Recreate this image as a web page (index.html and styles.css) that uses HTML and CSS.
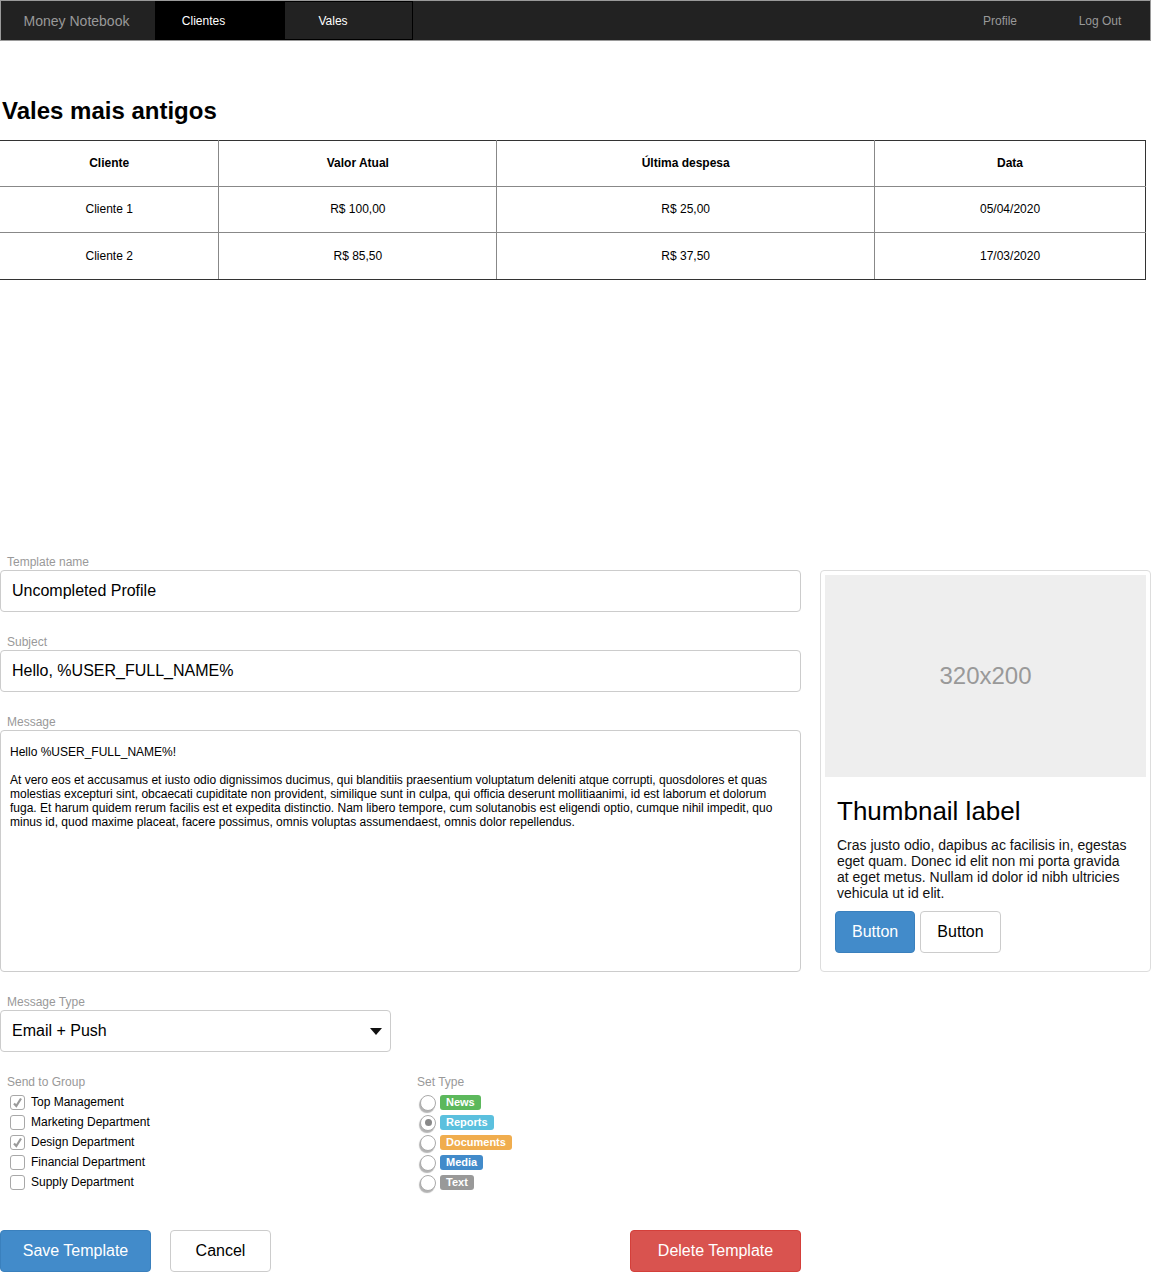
FILE: index.html
```html
<!DOCTYPE html>
<html lang="pt">
<head>
<meta charset="utf-8">
<title>Money Notebook</title>
<link rel="stylesheet" href="styles.css">
</head>
<body>
<nav class="nav">
  <div class="brand">Money Notebook</div>
  <a class="tab tab-active">Clientes</a>
  <a class="tab tab-outline">Vales</a>
  <div class="nav-spacer"></div>
  <a class="nav-item">Profile</a>
  <a class="nav-item">Log Out</a>
</nav>

<h2 class="page-title">Vales mais antigos</h2>

<table class="vales">
  <colgroup>
    <col class="c1"><col class="c2"><col class="c3"><col class="c4">
  </colgroup>
  <thead>
    <tr><th>Cliente</th><th>Valor Atual</th><th>Última despesa</th><th>Data</th></tr>
  </thead>
  <tbody>
    <tr><td>Cliente 1</td><td>R$ 100,00</td><td>R$ 25,00</td><td>05/04/2020</td></tr>
    <tr class="last"><td>Cliente 2</td><td>R$ 85,50</td><td>R$ 37,50</td><td>17/03/2020</td></tr>
  </tbody>
</table>

<section class="form">
  <div class="form-top">
    <div class="fields">
      <label class="lbl">Template name</label>
      <div class="input">Uncompleted Profile</div>
      <label class="lbl gap">Subject</label>
      <div class="input">Hello, %USER_FULL_NAME%</div>
      <label class="lbl gap">Message</label>
      <div class="textarea">Hello %USER_FULL_NAME%!<br><br>At vero eos et accusamus et iusto odio dignissimos ducimus, qui blanditiis praesentium voluptatum deleniti atque corrupti, quosdolores et quas molestias excepturi sint, obcaecati cupiditate non provident, similique sunt in culpa, qui officia deserunt mollitiaanimi, id est laborum et dolorum fuga. Et harum quidem rerum facilis est et expedita distinctio. Nam libero tempore, cum solutanobis est eligendi optio, cumque nihil impedit, quo minus id, quod maxime placeat, facere possimus, omnis voluptas assumendaest, omnis dolor repellendus.</div>
    </div>
    <div class="thumb">
      <div class="thumb-img">320x200</div>
      <div class="caption">
        <h3>Thumbnail label</h3>
        <p>Cras justo odio, dapibus ac facilisis in, egestas eget quam. Donec id elit non mi porta gravida at eget metus. Nullam id dolor id nibh ultricies vehicula ut id elit.</p>
        <div class="caption-btns">
          <button class="btn btn-primary">Button</button>
          <button class="btn btn-default">Button</button>
        </div>
      </div>
    </div>
  </div>

  <label class="lbl gap">Message Type</label>
  <div class="select">Email + Push<span class="caret"></span></div>

  <div class="groups">
    <div class="group-col">
      <label class="lbl grp">Send to Group</label>
      <div class="check-row"><span class="cb checked"><svg viewBox="0 0 15 15" width="15" height="15"><path d="M4 8.5 L6.3 11 L11 3.5" fill="none" stroke="#9a9a9a" stroke-width="2.2"/></svg></span>Top Management</div>
      <div class="check-row"><span class="cb"></span>Marketing Department</div>
      <div class="check-row"><span class="cb checked"><svg viewBox="0 0 15 15" width="15" height="15"><path d="M4 8.5 L6.3 11 L11 3.5" fill="none" stroke="#9a9a9a" stroke-width="2.2"/></svg></span>Design Department</div>
      <div class="check-row"><span class="cb"></span>Financial Department</div>
      <div class="check-row"><span class="cb"></span>Supply Department</div>
    </div>
    <div class="group-col">
      <label class="lbl grp">Set Type</label>
      <div class="radio-row"><span class="rb"></span><span class="badge b-green">News</span></div>
      <div class="radio-row"><span class="rb on"></span><span class="badge b-cyan">Reports</span></div>
      <div class="radio-row"><span class="rb"></span><span class="badge b-orange">Documents</span></div>
      <div class="radio-row"><span class="rb"></span><span class="badge b-blue">Media</span></div>
      <div class="radio-row"><span class="rb"></span><span class="badge b-gray">Text</span></div>
    </div>
  </div>

  <div class="actions">
    <button class="btn btn-primary btn-save">Save Template</button>
    <button class="btn btn-default btn-cancel">Cancel</button>
    <div class="nav-spacer"></div>
    <button class="btn btn-danger btn-delete">Delete Template</button>
  </div>
</section>
</body>
</html>
```

FILE: styles.css
```css
* { box-sizing: border-box; }

body {
  margin: 0;
  font-family: "Liberation Sans", Arial, sans-serif;
  color: #000;
  background: #fff;
}

/* Navbar */
.nav {
  display: flex;
  width: 1151px;
  height: 41px;
  background: #222;
  border: 1px solid #9a9a9a;
}
.brand {
  width: 154px;
  line-height: 40px;
  text-align: center;
  padding-right: 3px;
  font-size: 14px;
  color: #999;
}
.tab {
  width: 129px;
  line-height: 40px;
  text-align: center;
  padding-right: 32px;
  font-size: 12px;
  color: #fff;
}
.tab-active { background: #000; }
.tab-outline { border: 1px solid #000; line-height: 38px; padding-right: 31px; padding-left: 0; }
.nav-spacer { flex: 1; }
.nav-item {
  width: 100px;
  line-height: 40px;
  text-align: center;
  font-size: 12px;
  color: #999;
}

/* Heading + table */
.page-title {
  margin: 56px 0 15px;
  padding-left: 2px;
  font-size: 24px;
  line-height: 28px;
  font-weight: bold;
}
.vales {
  border-collapse: collapse;
  width: 1146px;
  font-size: 12px;
}
.vales .c1 { width: 219px; }
.vales .c2 { width: 278px; }
.vales .c3 { width: 378px; }
.vales .c4 { width: 271px; }
.vales th, .vales td {
  height: 46px;
  padding: 0 0 2px;
  text-align: center;
  vertical-align: middle;
  border: 1px solid #888;
}
.vales tr.last td { height: 47px; padding-bottom: 1px; }
.vales th { font-weight: bold; border-top: 1px solid #333; }
.vales tr > :first-child { border-left: none; }
.vales tr > :last-child { border-right: 1px solid #333; }
.vales tbody tr:last-child td { border-bottom: 1px solid #333; }

/* Form */
.form {
  margin-top: 275px;
  width: 1151px;
}
.form-top {
  display: flex;
  column-gap: 19px;
}
.fields { width: 801px; }
.lbl {
  display: block;
  padding-left: 7px;
  font-size: 12px;
  line-height: 14px;
  margin-bottom: 1px;
  color: #999;
}
.lbl.gap { margin-top: 23px; }
.lbl.grp { margin-bottom: 3px; }
.input, .select {
  height: 42px;
  border: 1px solid #ccc;
  border-radius: 4px;
  padding: 0 11px;
  font-size: 16px;
  line-height: 40px;
}
.textarea {
  height: 242px;
  border: 1px solid #ccc;
  border-radius: 4px;
  padding: 14px 9px 0;
  font-size: 12px;
  line-height: 14px;
}

/* Thumbnail */
.thumb {
  width: 331px;
  height: 402px;
  margin-top: 15px;
  border: 1px solid #ddd;
  border-radius: 4px;
  padding: 4px;
}
.thumb-img {
  height: 202px;
  background: #eee;
  color: #999;
  font-size: 24px;
  display: flex;
  align-items: center;
  justify-content: center;
}
.caption { padding: 18px 10px 0; }
.caption h3 {
  margin: 0 0 0 2px;
  font-size: 26px;
  line-height: 32px;
  font-weight: normal;
}
.caption p {
  margin: 10px 6px 10px 2px;
  font-size: 14px;
  line-height: 16px;
  color: #111;
}
.caption-btns { display: flex; gap: 5px; }

/* Buttons */
.btn {
  height: 42px;
  border: 1px solid #ccc;
  border-radius: 4px;
  font-family: "Liberation Sans", Arial, sans-serif;
  font-size: 16px;
  padding: 0 16px;
  background: #fff;
  color: #000;
}
.btn-primary { background: #428bca; border-color: #3a80bd; color: #fff; }
.btn-danger { background: #d9534f; border-color: #d43f3a; color: #fff; }
.caption-btns .btn-primary { width: 80px; }
.caption-btns .btn-default { width: 81px; }

/* Select */
.select {
  width: 391px;
  display: flex;
  align-items: center;
  justify-content: space-between;
  padding-right: 8px;
}
.caret {
  width: 0;
  height: 0;
  border-left: 6px solid transparent;
  border-right: 6px solid transparent;
  border-top: 7px solid #111;
  margin-top: 1px;
}

/* Groups */
.groups {
  display: flex;
  margin-top: 23px;
}
.group-col { width: 410px; }
.group-col + .group-col { width: auto; }
.check-row, .radio-row {
  display: flex;
  align-items: center;
  height: 20px;
  font-size: 12px;
}
.check-row { padding-left: 10px; }
.cb {
  width: 15px;
  height: 15px;
  border: 1px solid #a8a8a8;
  border-radius: 3px;
  margin-right: 6px;
  display: flex;
  align-items: center;
  justify-content: center;
  background: #fff;
}
.cb svg { display: block; margin: -1px; }
.radio-row { padding-left: 10px; }
.rb {
  width: 16px;
  height: 16px;
  border: 1px solid #aaa;
  border-radius: 50%;
  margin-right: 4px;
  margin-top: 1px;
  background: #fff;
  box-shadow: -1px 2px 1px rgba(0,0,0,0.3);
  display: flex;
  align-items: center;
  justify-content: center;
}
.rb.on::after {
  content: "";
  width: 7px;
  height: 7px;
  border-radius: 50%;
  background: #888;
}
.badge {
  display: inline-block;
  font-size: 11px;
  font-weight: bold;
  line-height: 15px;
  padding: 0 6px;
  border-radius: 3px;
  color: #fff;
}
.b-green { background: #5cb85c; }
.b-cyan { background: #5bc0de; }
.b-orange { background: #f0ad4e; }
.b-blue { background: #428bca; }
.b-gray { background: #999; }

/* Actions */
.actions {
  display: flex;
  width: 801px;
  margin-top: 38px;
}
.btn-save { width: 151px; }
.btn-cancel { width: 101px; margin-left: 19px; }
.btn-delete { width: 171px; }
```
